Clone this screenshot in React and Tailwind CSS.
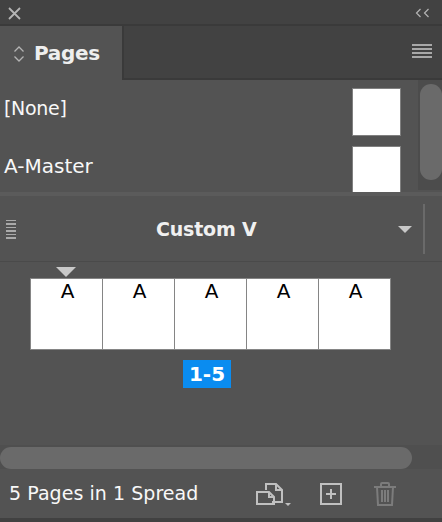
export default function App() {
  return (
    <div className="w-[442px] h-[522px] flex flex-col bg-[#535353] overflow-hidden font-['DejaVu_Sans',sans-serif] text-[#f0f0f0]">
      {/* Title bar */}
      <div className="h-[26px] shrink-0 flex items-center justify-between bg-[#424242] border-b-2 border-[#3a3a3a] pl-[8px] pr-[12px]">
        <svg width="13" height="13" viewBox="0 0 13 13" className="mt-[3px]">
          <path d="M1 1 L12 12 M12 1 L1 12" stroke="#b4b4b4" strokeWidth="1.8" />
        </svg>
        <svg width="15" height="10" viewBox="0 0 15 10" className="mt-[1px]">
          <path d="M5.5 1 L1.5 5 L5.5 9 M13.5 1 L9.5 5 L13.5 9" stroke="#b4b4b4" strokeWidth="1.2" fill="none" />
        </svg>
      </div>
      {/* Tab row */}
      <div className="h-[54px] shrink-0 flex">
        <div className="w-[122px] flex items-center bg-[#535353] pl-[13px] gap-[9px]">
          <svg width="12" height="18" viewBox="0 0 12 18" className="mt-[1px]">
            <path d="M1.5 6.5 L6 2 L10.5 6.5 M1.5 11.5 L6 16 L10.5 11.5" stroke="#b4b4b4" strokeWidth="1.3" fill="none" />
          </svg>
          <span className="text-[20px] font-bold leading-none text-[#eeeeee] tracking-[-0.3px]">Pages</span>
        </div>
        <div className="flex-1 flex items-center justify-end bg-[#424242] border-l-2 border-b-2 border-[#3a3a3a] pr-[10px] pb-[2px]">
          <div className="w-[20px] flex flex-col gap-[2px]">
            <div className="h-[2px] bg-[#a8a8a8]" />
            <div className="h-[2px] bg-[#a8a8a8]" />
            <div className="h-[2px] bg-[#a8a8a8]" />
            <div className="h-[2px] bg-[#a8a8a8]" />
          </div>
        </div>
      </div>
      {/* Master list */}
      <div className="h-[112px] shrink-0 flex">
        <div className="flex-1 flex flex-col pl-[4px] pr-[17px] pt-[8px] gap-[10px] overflow-hidden">
          <div className="h-[48px] shrink-0 flex items-center justify-between">
            <span className="text-[19px] leading-none text-[#f8f8f8] mt-[-8px] tracking-[-0.3px]">[None]</span>
            <div className="w-[49px] h-[48px] bg-white border border-[#808080]" />
          </div>
          <div className="h-[48px] shrink-0 flex items-center justify-between">
            <span className="text-[20px] leading-none text-[#f8f8f8] mt-[-9px]">A-Master</span>
            <div className="w-[49px] h-[48px] bg-white border border-[#808080]" />
          </div>
        </div>
        <div className="w-[24px] h-[110px] bg-[#4c4c4c] pl-[2px] pt-[4px]">
          <div className="w-[22px] h-[96px] rounded-[11px] bg-[#6a6a6a]" />
        </div>
      </div>
      <div className="h-[4px] shrink-0 bg-[#5b5b5b]" />
      {/* Dropdown row */}
      <div className="h-[66px] shrink-0 flex items-center border-b border-[#4a4a4a] pl-[6px]">
        <div className="w-[10px] flex flex-col gap-[2px] mt-[1px]">
          {[0, 1, 2, 3, 4, 5].map((i) => (
            <div key={i} className="h-[1.5px] bg-[#aaaaaa]" />
          ))}
        </div>
        <span className="ml-[140px] w-[242px] mt-[2px] text-[19px] font-bold leading-none text-[#f0f0f0] tracking-[-0.2px]">Custom V</span>
        <svg width="14" height="7" viewBox="0 0 14 7" className="mt-[1px]">
          <path d="M0 0 H14 L7 7 Z" fill="#c8c8c8" />
        </svg>
        <div className="ml-[11px] w-[2px] h-[50px] bg-[#6a6a6a]" />
      </div>
      {/* Pages canvas */}
      <div className="flex-1 flex flex-col items-start pl-[30px]">
        <svg width="20" height="10" viewBox="0 0 20 10" className="ml-[26px] mt-[5px]">
          <path d="M0 0 H20 L10 10 Z" fill="#c8c8c8" />
        </svg>
        <div className="flex mt-[1px] border border-[#858585] bg-white">
          {[0, 1, 2, 3, 4].map((i) => (
            <div key={i} className="w-[72px] h-[70px] border-r border-[#858585] last:border-r-0 last:w-[71px] flex justify-center">
              <span className="text-[20px] leading-none text-black mt-[2px] ml-[2px]">A</span>
            </div>
          ))}
        </div>
        <div className="ml-[153px] mt-[10px] w-[48px] h-[28px] flex items-center justify-center bg-[#0a8cf0] text-white text-[20px] font-bold leading-none">
          1-5
        </div>
      </div>
      {/* Horizontal scrollbar */}
      <div className="h-[24px] shrink-0 bg-[#4f4f4f] pt-[2px] pr-[30px]">
        <div className="h-[22px] rounded-[11px] bg-[#6a6a6a]" />
      </div>
      {/* Footer */}
      <div className="h-[49px] shrink-0 flex items-center pl-[9px]">
        <span className="text-[19px] leading-none text-[#f8f8f8] w-[247px] tracking-[0.05px]">5 Pages in 1 Spread</span>
        <svg width="38" height="24" viewBox="0 0 38 24" className="mt-[1px]" fill="none" stroke="#c0c0c0" strokeWidth="2">
          <path d="M10 8 V2 H20 L26 8 V20 H16" />
          <path d="M20 2 V8 H26" />
          <path d="M1 10 H13 L18 15 V22 H1 Z" />
          <path d="M13 10 V15 H18" />
          <path d="M29 21 H35 L32 24 Z" fill="#c0c0c0" stroke="none" />
        </svg>
        <svg width="22" height="22" viewBox="0 0 22 22" className="ml-[26px]" fill="none" stroke="#c0c0c0">
          <rect x="1" y="1" width="20" height="20" strokeWidth="2" />
          <path d="M11 6 V16 M6 11 H16" strokeWidth="2" />
        </svg>
        <svg width="22" height="24" viewBox="0 0 22 24" className="ml-[32px]" fill="none" stroke="#7c7c7c" strokeWidth="2">
          <path d="M0 5 H22" />
          <path d="M7 4 V2 Q7 1 8 1 H14 Q15 1 15 2 V4" />
          <path d="M3 5 L4 23 H18 L19 5" />
          <path d="M8 8 V20 M11 8 V20 M14 8 V20" />
        </svg>
      </div>
      <div className="h-[4px] shrink-0 bg-[#414141]" />
    </div>
  );
}
